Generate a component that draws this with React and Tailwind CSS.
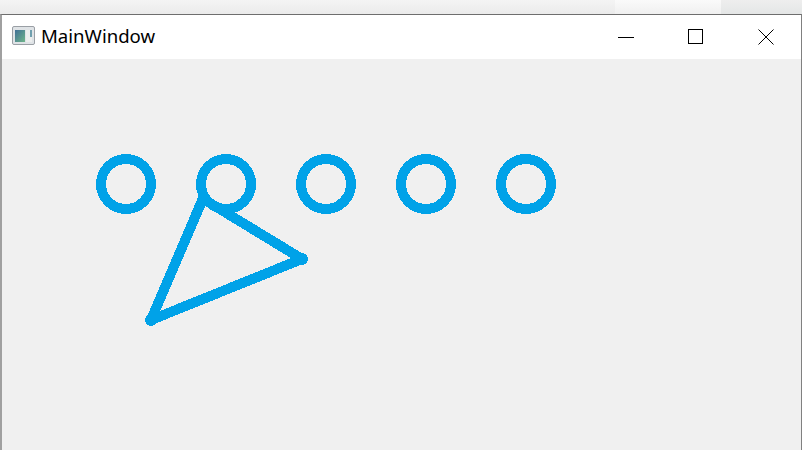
import React from 'react';

const circles = [126, 226, 326, 426, 526];

function AppIcon() {
  return (
    <svg width="24" height="20" viewBox="0 0 24 20" className="shrink-0">
      <defs>
        <linearGradient id="pane" x1="0" y1="0" x2="1" y2="1">
          <stop offset="0" stopColor="#3f6f96" />
          <stop offset="1" stopColor="#6fb58a" />
        </linearGradient>
      </defs>
      <rect x="0.5" y="0.5" width="22" height="18" rx="1.5" fill="#dfe3e6" stroke="#9a9fa5" />
      <rect x="3" y="4" width="10" height="12" fill="url(#pane)" />
      <rect x="14" y="4" width="6" height="12" fill="#eceeee" />
      <rect x="18" y="4" width="2" height="7" fill="#6f9fae" />
    </svg>
  );
}

export default function App() {
  return (
    <div className="w-[802px] h-[450px] overflow-hidden flex flex-col bg-[#f0f0f0]">
      <div className="h-[14px] flex shrink-0">
        <div className="w-[615px] bg-gradient-to-b from-[#f4f4f4] to-[#ebebeb]" />
        <div className="w-[106px] bg-gradient-to-b from-[#fafafa] to-[#f0f0f0]" />
        <div className="flex-1 bg-gradient-to-b from-[#eeeeee] to-[#e4e6e6]" />
      </div>
      <div className="flex-1 flex flex-col border-t border-t-[#6e6e6e] border-l-2 border-l-[#a0a0a0] border-r border-r-[#808080] min-h-0">
        <div className="h-[44px] bg-white flex items-start shrink-0">
          <div className="ml-[10px] mr-[6px] mt-[11px] flex items-center"><AppIcon /></div>
          <span className="mt-[8px] text-[18.6px] leading-[26px] text-black -translate-x-px" style={{ fontFamily: '"Noto Sans", sans-serif' }}>MainWindow</span>
          <div className="ml-auto flex items-start">
            <div className="w-[70px] h-[43px] flex items-center justify-center">
              <svg width="16" height="16" viewBox="0 0 16 16" shapeRendering="crispEdges">
                <path d="M0 8H16" stroke="#000" strokeWidth="1" />
              </svg>
            </div>
            <div className="w-[70px] h-[43px] flex items-center justify-center">
              <svg width="16" height="16" viewBox="0 0 16 16" shapeRendering="crispEdges">
                <rect x="0.5" y="0.5" width="14" height="14" fill="none" stroke="#000" />
              </svg>
            </div>
            <div className="w-[70px] h-[43px] flex items-center justify-center">
              <svg width="16" height="16" viewBox="0 0 16 16">
                <path d="M0.5 0.5L15.5 15.5M15.5 0.5L0.5 15.5" stroke="#000" strokeWidth="1" />
              </svg>
            </div>
          </div>
        </div>
        <div className="flex-1 min-h-0 bg-[#f0f0f0]">
          {/* viewBox uses page coordinates, canvas starts at 2,59 */}
          <svg width="799" height="391" viewBox="2 59 799 391" className="block" shapeRendering="crispEdges">
            {circles.map((cx) => (
              <circle key={cx} cx={cx} cy="184" r="25" fill="none" stroke="#00a2e8" strokeWidth="10" />
            ))}
            <path d="M204 196L151 320L302 259L205 200" fill="none" stroke="#00a2e8" strokeWidth="10" strokeLinecap="round" strokeLinejoin="round" />
            <circle cx="151" cy="320" r="6" fill="#00a2e8" />
            <circle cx="302" cy="259" r="6" fill="#00a2e8" />
          </svg>
        </div>
      </div>
    </div>
  );
}
